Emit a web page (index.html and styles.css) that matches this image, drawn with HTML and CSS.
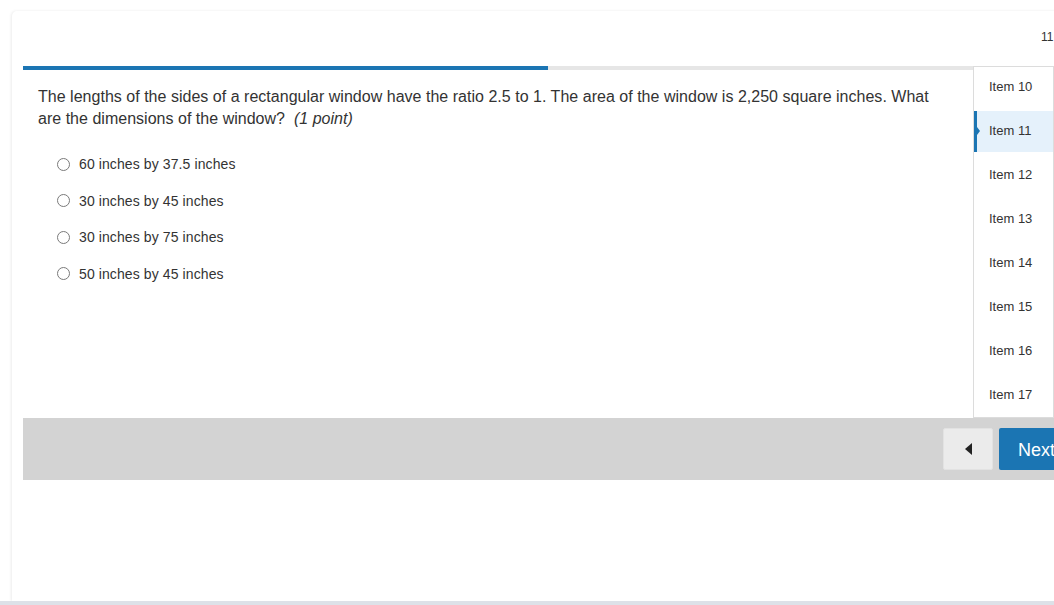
FILE: index.html
```html
<!DOCTYPE html>
<html lang="en">

<head>
    <meta charset="UTF-8">
    <meta name="viewport" content="width=device-width, initial-scale=1.0">
    <title>Quiz</title>
    <link rel="stylesheet" href="styles.css">
</head>

<body>

    <div class="card">
        <div class="topbar">
            <span class="counter">11</span>
        </div>

        <div class="quiz">
            <div class="main">
                <div class="progress">
                    <div class="progress-fill" style="width: 525px;"></div>
                </div>

                <p class="question">
                    The lengths of the sides of a rectangular window have the ratio 2.5 to 1. The area of the window is 2,250 square inches. What are the dimensions of the window?&nbsp; <em>(1 point)</em>
                </p>

                <ul class="options">
                    <li><span class="radio"></span>60 inches by 37.5 inches</li>
                    <li><span class="radio"></span>30 inches by 45 inches</li>
                    <li><span class="radio"></span>30 inches by 75 inches</li>
                    <li><span class="radio"></span>50 inches by 45 inches</li>
                </ul>
            </div>

            <ul class="items">
                <li>Item 10</li>
                <li class="active">Item 11</li>
                <li>Item 12</li>
                <li>Item 13</li>
                <li>Item 14</li>
                <li>Item 15</li>
                <li>Item 16</li>
                <li>Item 17</li>
            </ul>
        </div>

        <div class="footer">
            <div class="nav">
                <button type="button" class="btn back-btn"><span class="arrow-left"></span></button>
                <button type="button" class="btn next-btn">Next</button>
            </div>
        </div>
    </div>

    <div class="bottom-strip"></div>

</body>

</html>
```

FILE: styles.css
```css
html,
body {
    margin: 0;
    height: 605px;
    overflow: hidden;
}

body {
    font-family: "Liberation Sans", Arial, sans-serif;
    background-color: #fff;
    color: #333;
}

.card {
    margin: 11px 0 0 12px;
    padding-left: 11px;
    width: 1120px;
    height: 590px;
    border-radius: 5px 0 0 0;
    box-shadow: -1px 0 3px rgba(0, 0, 0, 0.08);
    background: #fff;
}

.topbar {
    height: 55px;
    display: flex;
    align-items: center;
    padding: 0 0 0 1018px;
}

.counter {
    font-size: 12px;
    margin-top: -4px;
}

.quiz {
    display: flex;
    width: 1031px;
    height: 352px;
}

.main {
    width: 950px;
}

.progress {
    height: 4px;
    background: #e6e6e6;
}

.progress-fill {
    height: 4px;
    background: #1b75b3;
}

.question {
    margin: 0;
    padding: 16px 30px 0 15px;
    font-size: 16px;
    line-height: 22px;
    letter-spacing: 0.02px;
}

.options {
    list-style: none;
    margin: 16px 0 0 0;
    padding: 0 0 0 34px;
}

.options li {
    display: flex;
    align-items: center;
    height: 36.5px;
    font-size: 14px;
    letter-spacing: 0.1px;
}

.radio {
    width: 11px;
    height: 11px;
    border: 1px solid #7a7a7a;
    border-radius: 50%;
    margin-right: 9px;
}

.items {
    list-style: none;
    margin: 0;
    padding: 0;
    width: 79px;
    border: 1px solid #dcdcdc;
    overflow: hidden;
}

.items li {
    height: 44px;
    line-height: 40px;
    padding-left: 15px;
    font-size: 13px;
    position: relative;
}

.items li.active {
    background: #e5f1fb;
    height: 41px;
    margin: 0 0 3px 0;
    padding-left: 12px;
    border-left: 3px solid #1b75b3;
}

/* little pointer next to the current item */
.items li.active:before {
    content: "";
    position: absolute;
    left: 0;
    top: 16px;
    border-top: 4px solid transparent;
    border-bottom: 4px solid transparent;
    border-left: 3px solid #1b75b3;
}

.footer {
    width: 1100px;
    height: 62px;
    background: #d3d3d3;
    display: flex;
}

.nav {
    display: flex;
    gap: 6px;
    padding: 10px 0 0 920px;
}

.btn {
    height: 42px;
    border: none;
    border-radius: 2px;
    cursor: pointer;
    font-family: inherit;
}

.back-btn {
    width: 50px;
    background: #ebebeb;
    border: 1px solid #e2e2e2;
    display: flex;
    align-items: center;
    justify-content: center;
}

.arrow-left {
    border-top: 6px solid transparent;
    border-bottom: 6px solid transparent;
    border-right: 7px solid #222;
}

.next-btn {
    width: 80px;
    background: #1b75b3;
    color: #fff;
    font-size: 18px;
    text-align: left;
    padding: 2px 0 0 19px;
}

.bottom-strip {
    height: 4px;
    background: #dde1e8;
}
```
